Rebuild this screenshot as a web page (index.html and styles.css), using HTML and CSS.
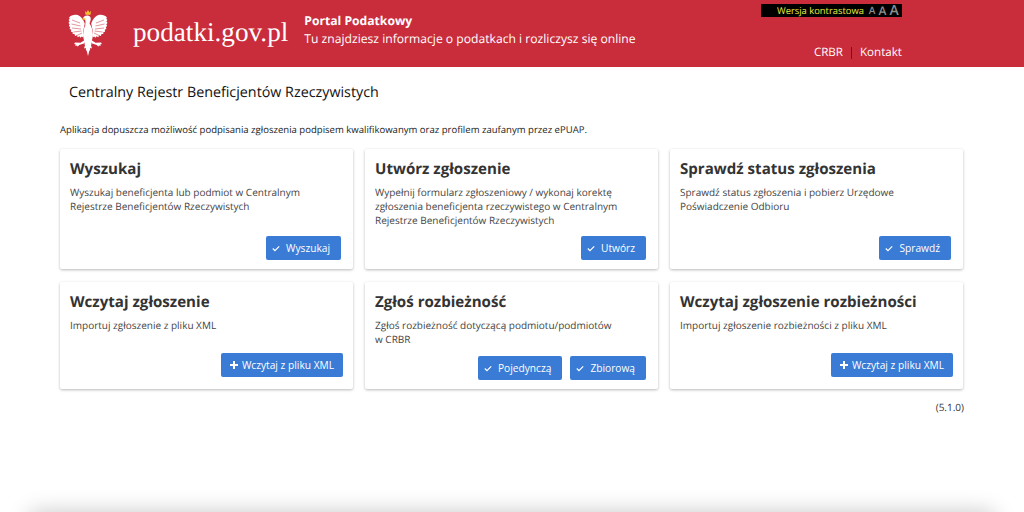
FILE: index.html
```html
<!DOCTYPE html>
<html lang="pl">
<head>
    <meta charset="UTF-8">
    <meta name="viewport" content="width=device-width, initial-scale=1.0">
    <title>Centralny Rejestr Beneficjentów Rzeczywistych</title>
    <link rel="stylesheet" href="styles.css">
</head>
<body>
    <header class="top-bar">
        <svg class="eagle" viewBox="0 0 40 46" aria-hidden="true">
            <defs>
                <g id="half">
                    <path fill="#fff" d="M16.8 13.5C15.5 10 13 6 9.500 5 6.500 4.200 3 5 1 7.500l.8 1-1.200 1.500 1 1.300L.5 13l1.200 1.200-.9 1.800 1.400 1-.6 2 1.600.7-.3 2 1.700.4.100 2 1.800 0 .6 1.900 1.800-.5.900 1.700 1.600-.9 1.200 1.400 1.200-1.300 1.200.9.800-1.800-.8-3.500z"/>
                    <path fill="none" stroke="#c92c3b" stroke-width=".5" d="M4 10l8 3M3.500 14l9 2M4 18l9 1M5.500 22l8-1M8 26l6-3"/>
                    <path fill="#fff" d="M17.500 29.500l-5 3.200-5.500-.3-.9 1.500 1.800.5-.8 1.700 1.900-.6.800 1.300 1.300-1.900 4.900-1.300 2-2.500z"/>
                    <path fill="#fff" d="M20 12v20h-3.300c-1.400-3-1.900-7-1.200-11 .4-3 1.700-6.500 4.500-9z"/>
                    <path fill="#fff" d="M20 31h-2.800l-.7 3 .5 1.200-1 3.300 1.700-.7.400 3 1.900-1.300z"/>
                    <path fill="#fff" d="M20 46l-1.600-6.500 1.600-2z"/>
                </g>
            </defs>
            <path fill="#f2c230" d="M17 .8l1.500 1.600L20 0l1.500 2.400L23 .8l-.5 4h-5z"/>
            <use href="#half"/>
            <use href="#half" transform="translate(40 0) scale(-1 1)"/>
            <path fill="#fff" d="M15 8.500c.5-2 2.500-3.200 4.700-3 2.300.2 3.300 2 3 4-.3 2-1.300 3.500-1.400 5.500h-4c.2-1.800.4-3.500-.2-5.200z"/>
            <path fill="#f2c230" d="M14 9.800l1.200-2 2.500 .6-.5 1.400z"/>
        </svg>
        <a class="logo-text">podatki.gov.pl</a>
        <div class="portal-info">
            <strong>Portal Podatkowy</strong>
            <span>Tu znajdziesz informacje o podatkach i rozliczysz się online</span>
        </div>
        <div class="top-right">
            <div class="contrast-bar">
                <span>Wersja kontrastowa</span>
                <span class="size-a small">A</span>
                <span class="size-a medium">A</span>
                <span class="size-a large">A</span>
            </div>
            <nav class="top-nav">
                <a>CRBR</a>
                <i class="nav-sep"></i>
                <a>Kontakt</a>
            </nav>
        </div>
    </header>

    <main class="content">
        <h1 class="page-title">Centralny Rejestr Beneficjentów Rzeczywistych</h1>
        <p class="notice">Aplikacja dopuszcza możliwość podpisania zgłoszenia podpisem kwalifikowanym oraz profilem zaufanym przez ePUAP.</p>

        <div class="cards row-one">
            <section class="card">
                <h2>Wyszukaj</h2>
                <p>Wyszukaj beneficjenta lub podmiot w Centralnym<br>Rejestrze Beneficjentów Rzeczywistych</p>
                <div class="card-actions">
                    <button class="btn"><svg class="icon-check" viewBox="0 0 10 8"><path d="M1 4l2.700 2.700L9 1.300"/></svg>Wyszukaj</button>
                </div>
            </section>
            <section class="card">
                <h2>Utwórz zgłoszenie</h2>
                <p>Wypełnij formularz zgłoszeniowy / wykonaj korektę<br>zgłoszenia beneficjenta rzeczywistego w Centralnym<br>Rejestrze Beneficjentów Rzeczywistych</p>
                <div class="card-actions">
                    <button class="btn"><svg class="icon-check" viewBox="0 0 10 8"><path d="M1 4l2.700 2.700L9 1.300"/></svg>Utwórz</button>
                </div>
            </section>
            <section class="card">
                <h2>Sprawdź status zgłoszenia</h2>
                <p>Sprawdź status zgłoszenia i pobierz Urzędowe<br>Poświadczenie Odbioru</p>
                <div class="card-actions">
                    <button class="btn"><svg class="icon-check" viewBox="0 0 10 8"><path d="M1 4l2.700 2.700L9 1.300"/></svg>Sprawdź</button>
                </div>
            </section>
        </div>

        <div class="cards row-two">
            <section class="card">
                <h2>Wczytaj zgłoszenie</h2>
                <p>Importuj zgłoszenie z pliku XML</p>
                <div class="card-actions wide">
                    <button class="btn btn-plus"><svg class="icon-plus" viewBox="0 0 8 8"><path d="M4 0v8M0 4h8"/></svg>Wczytaj z pliku XML</button>
                </div>
            </section>
            <section class="card">
                <h2>Zgłoś rozbieżność</h2>
                <p>Zgłoś rozbieżność dotyczącą podmiotu/podmiotów<br>w CRBR</p>
                <div class="card-actions">
                    <button class="btn"><svg class="icon-check" viewBox="0 0 10 8"><path d="M1 4l2.700 2.700L9 1.300"/></svg>Pojedynczą</button>
                    <button class="btn"><svg class="icon-check" viewBox="0 0 10 8"><path d="M1 4l2.700 2.700L9 1.300"/></svg>Zbiorową</button>
                </div>
            </section>
            <section class="card">
                <h2>Wczytaj zgłoszenie rozbieżności</h2>
                <p>Importuj zgłoszenie rozbieżności z pliku XML</p>
                <div class="card-actions wide">
                    <button class="btn btn-plus"><svg class="icon-plus" viewBox="0 0 8 8"><path d="M4 0v8M0 4h8"/></svg>Wczytaj z pliku XML</button>
                </div>
            </section>
        </div>

        <div class="version">(5.1.0)</div>
    </main>

    <footer class="bottom"></footer>
</body>
</html>
```

FILE: styles.css
```css
html, body {
    margin: 0;
    height: 512px;
    overflow: hidden;
}

body {
    font-family: "Open Sans", sans-serif;
    background-color: #fff;
    color: #333;
    text-rendering: geometricPrecision;
}

/* Naglowek */
.top-bar {
    display: flex;
    align-items: flex-start;
    height: 67px;
    padding-left: 68px;
    padding-right: 122px;
    background-color: #c92c3b;
    color: #fff;
}

.eagle {
    width: 40px;
    height: 46px;
    margin-top: 10px;
    flex: none;
}

.logo-text {
    margin-left: 25px;
    margin-top: 14px;
    font-family: "Liberation Serif", serif;
    font-size: 27.2px;
    line-height: 36px;
}

.portal-info {
    display: flex;
    flex-direction: column;
    margin-left: 16px;
    margin-top: 12px;
    font-size: 12.15px;
    line-height: 18px;
}

.portal-info strong {
    font-weight: 700;
}

.top-right {
    display: flex;
    flex-direction: column;
    align-items: flex-end;
    margin-left: auto;
}

.contrast-bar {
    display: flex;
    align-items: flex-end;
    gap: 3px;
    height: 13px;
    width: 141px;
    margin-top: 4px;
    padding-left: 16px;
    box-sizing: border-box;
    background-color: #000;
    color: #e6ee3c;
    font-size: 9.4px;
    line-height: 13px;
}

.contrast-bar span:first-child {
    margin-right: 2px;
}

.size-a {
    color: #8d8d8d;
    font-weight: 600;
}

.size-a.small { font-size: 10px; }
.size-a.medium { font-size: 12px; }
.size-a.large { font-size: 14px; }

.top-nav {
    display: flex;
    align-items: center;
    margin-top: 27px;
    font-size: 11.6px;
    line-height: 18px;
}

.nav-sep {
    width: 1px;
    height: 12px;
    margin: 0 8px;
    background-color: #6b1620;
}

/* Tresc */
.content {
    width: 904px;
    margin-left: 60px;
}

.page-title {
    margin: 16px 0 0 9px;
    font-size: 14.3px;
    font-weight: 400;
    line-height: 20px;
    color: #111;
}

.notice {
    margin: 20px 0 0;
    font-size: 9.55px;
    line-height: 14px;
    color: #222;
}

.cards {
    display: grid;
    grid-template-columns: repeat(3, 293px);
    column-gap: 12px;
}

.row-one {
    grid-auto-rows: 120px;
    margin-top: 12px;
}

.row-two {
    grid-auto-rows: 107px;
    margin-top: 13px;
}

.card {
    display: flex;
    flex-direction: column;
    padding: 9px 10px 9px;
    box-sizing: border-box;
    background-color: #fff;
    border-radius: 2px;
    box-shadow: 0 1px 3px rgba(0, 0, 0, 0.28);
}

.card h2 {
    margin: 0;
    font-size: 15.1px;
    font-weight: 700;
    line-height: 22px;
    color: #333;
}

.card p {
    margin: 5px 0 0;
    font-size: 10px;
    line-height: 14px;
    color: #444;
}

.card-actions {
    display: flex;
    justify-content: flex-end;
    gap: 8px;
    margin-top: auto;
    padding-right: 2px;
}

.card-actions.wide {
    padding-right: 0;
    padding-bottom: 3px;
}

.btn {
    display: flex;
    align-items: center;
    height: 24px;
    padding: 0 11px 0 6px;
    border: none;
    border-radius: 2px;
    background-color: #3a7bd5;
    color: #fff;
    font-family: inherit;
    font-size: 10.2px;
    white-space: nowrap;
}

.btn-plus {
    padding: 0 9px;
}

.icon-check {
    width: 8px;
    height: 7px;
    margin: 0 6px 0 0;
    fill: none;
    stroke: #fff;
    stroke-width: 1.5;
}

.icon-plus {
    width: 8px;
    height: 8px;
    margin-right: 4px;
    fill: none;
    stroke: #fff;
    stroke-width: 2;
}

.version {
    margin-top: 12px;
    font-size: 10px;
    line-height: 13px;
    text-align: right;
}

.bottom {
    position: absolute;
    top: 512px;
    left: 30px;
    right: 30px;
    height: 30px;
    box-shadow: 0 0 22px rgba(0, 0, 0, 0.22);
}
```
